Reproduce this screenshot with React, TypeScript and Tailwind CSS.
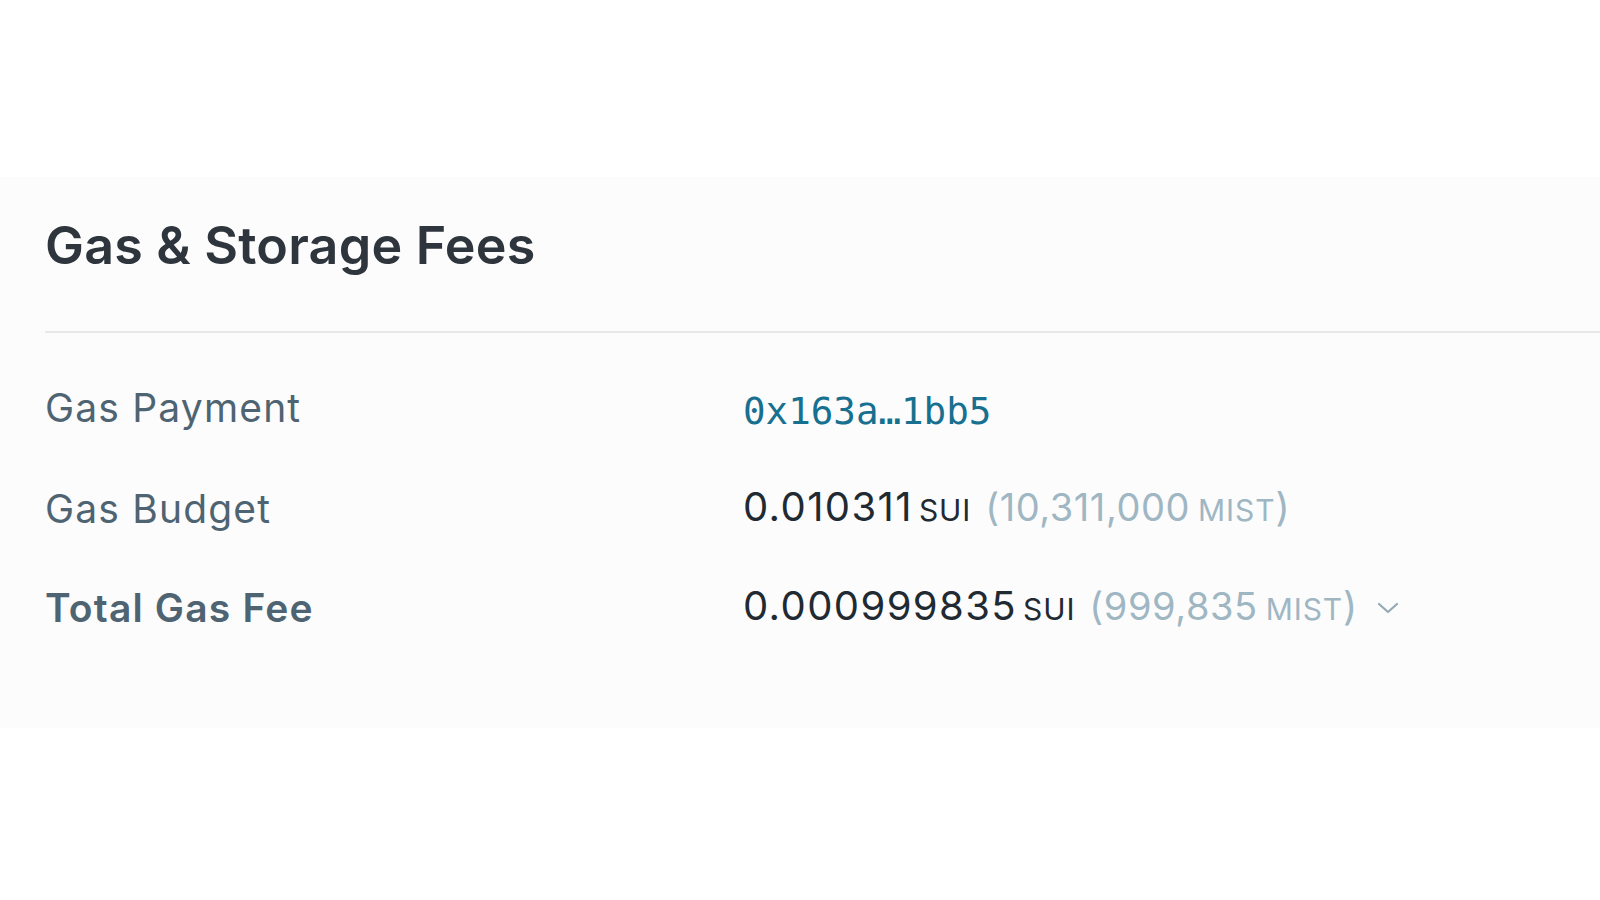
import React from 'react';

interface FeeRow {
  label: string;
  strong?: boolean;
  sui?: string;
  mist?: string;
  address?: string;
  expandable?: boolean;
}

const rows: FeeRow[] = [
  { label: 'Gas Payment', address: '0x163a…1bb5' },
  { label: 'Gas Budget', sui: '0.010311', mist: '10,311,000' },
  { label: 'Total Gas Fee', strong: true, sui: '0.000999835', mist: '999,835', expandable: true },
];

const ChevronDown = () => (
  <svg width="22" height="12" viewBox="0 0 22 12" fill="none" className="ml-[20px]">
    <path d="M2 2l9 8 9-8" stroke="#93a9b6" strokeWidth="2.2" strokeLinecap="round" strokeLinejoin="round" />
  </svg>
);

const Amount: React.FC<{ sui: string; mist: string; expandable?: boolean }> = ({ sui, mist, expandable }) => (
  <div className="flex items-center">
    <div className="flex items-baseline">
      <span className="text-[40px] leading-[46px] tracking-[0.035em] text-[#1f2a33]">{sui}</span>
      <span className="ml-[6px] text-[30px] tracking-[0.03em] text-[#1f2a33]">SUI</span>
      <span className="ml-[14px] text-[38px] leading-[46px] tracking-[0.015em] text-[#9fb6c3]">({mist}</span>
      <span className="ml-[8px] text-[30px] tracking-[0.03em] text-[#9fb6c3]">MIST</span>
      <span className="text-[39px] leading-[46px] text-[#9fb6c3]">)</span>
    </div>
    {expandable && <ChevronDown />}
  </div>
);

export default function App() {
  return (
    <div className="min-h-screen bg-white pt-[177px] font-['Inter',sans-serif]">
      <section className="bg-[#fcfcfc] pl-[45px] pt-[37px] pb-[96px]">
        <h2 className="text-[52px] leading-[64px] font-semibold text-[#2f353d] tracking-[0.004em]">
          Gas &amp; Storage Fees
        </h2>
        <div className="mt-[53px] h-[2px] bg-[#e6e8ea]" />

        <div className="mt-[48px] flex flex-col gap-[50px]">
          {rows.map((row) => (
            <div key={row.label} className="flex items-center">
              <div
                className={`w-[698px] shrink-0 text-[39px] leading-[46px] tracking-[0.03em] text-[#4f6472] ${
                  row.strong ? 'font-semibold' : 'font-normal'
                }`}
              >
                {row.label}
              </div>
              {row.address ? (
                <a className="font-['DejaVu_Sans_Mono',monospace] text-[37.5px] leading-[46px] text-[#17708f] mt-[7px]">
                  {row.address}
                </a>
              ) : (
                <Amount sui={row.sui!} mist={row.mist!} expandable={row.expandable} />
              )}
            </div>
          ))}
        </div>
      </section>
    </div>
  );
}
